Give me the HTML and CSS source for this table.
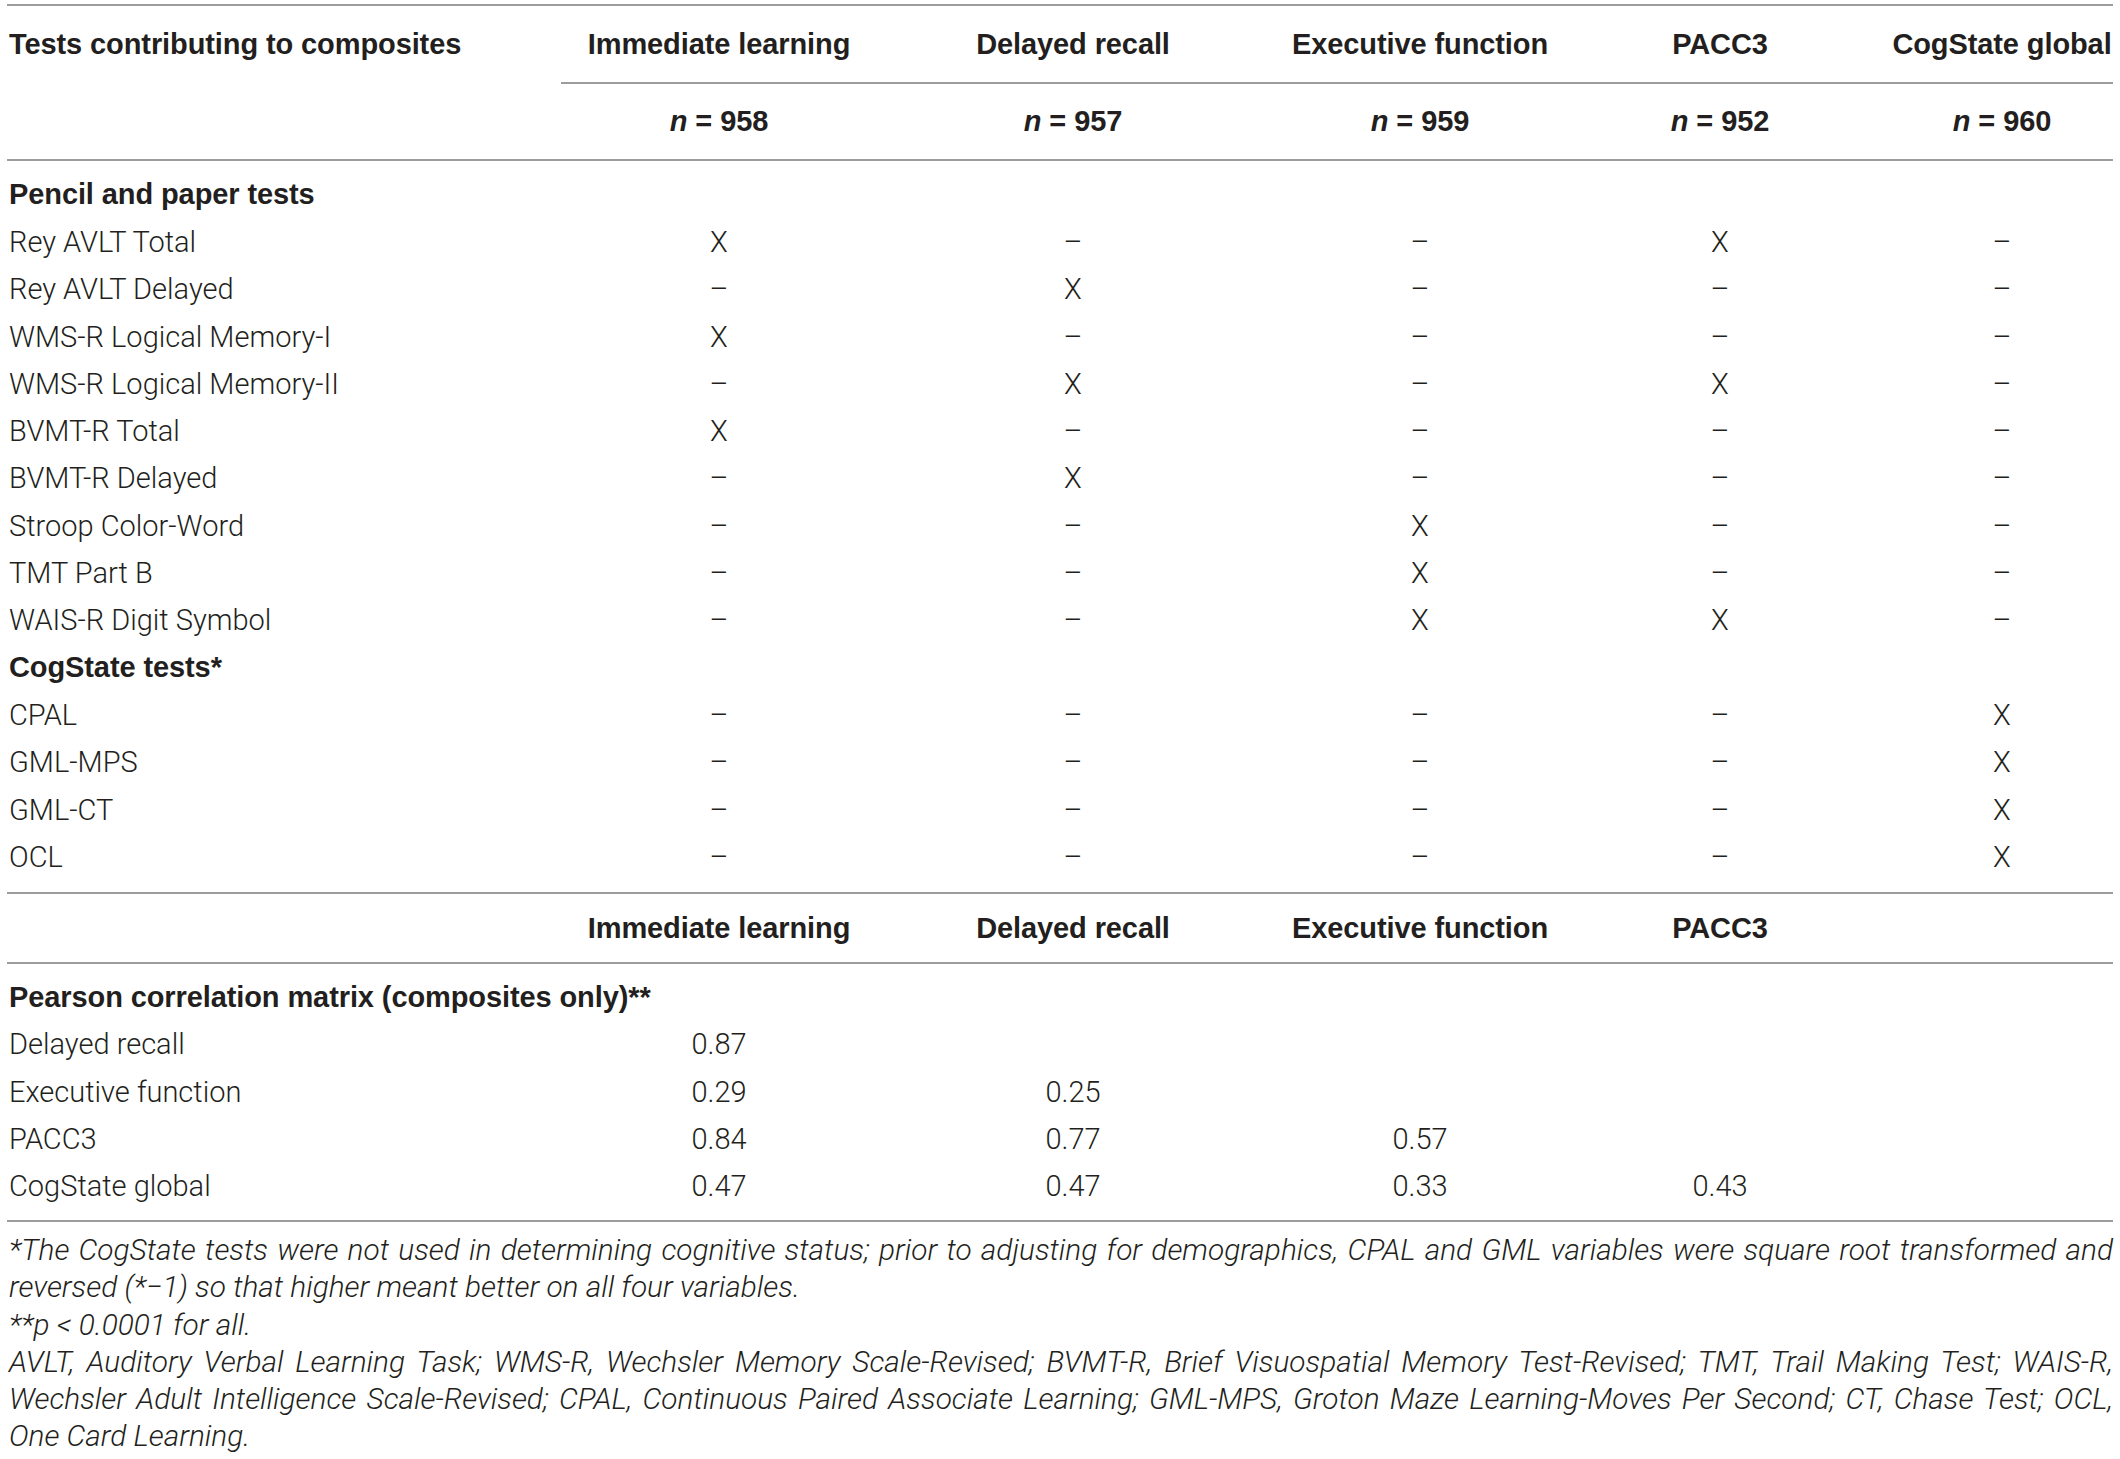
FILE: index.html
```html
<!DOCTYPE html>
<html lang="en">
<head>
    <meta charset="UTF-8">
    <title>Tests contributing to composites</title>
    <link rel="stylesheet" href="styles.css">
</head>
<body>
    <div class="table-wrap">
        <table class="comp-table">
            <colgroup>
                <col class="c-label">
                <col class="c-imm">
                <col class="c-del">
                <col class="c-exec">
                <col class="c-pacc">
                <col class="c-cog">
            </colgroup>
            <thead>
                <tr class="head-row top">
                    <th class="label">Tests contributing to composites</th>
                    <th>Immediate learning</th>
                    <th>Delayed recall</th>
                    <th>Executive function</th>
                    <th>PACC3</th>
                    <th class="last">CogState global</th>
                </tr>
                <tr class="head-row n-row">
                    <th class="label"></th>
                    <th><i>n</i> = 958</th>
                    <th><i>n</i> = 957</th>
                    <th><i>n</i> = 959</th>
                    <th><i>n</i> = 952</th>
                    <th class="last"><i>n</i> = 960</th>
                </tr>
            </thead>
            <tbody class="section tests">
                <tr class="spacer top"><td colspan="6"></td></tr>
                <tr class="group"><td class="label" colspan="6">Pencil and paper tests</td></tr>
                <tr><td class="label">Rey AVLT Total</td><td>X</td><td>–</td><td>–</td><td>X</td><td class="last">–</td></tr>
                <tr><td class="label">Rey AVLT Delayed</td><td>–</td><td>X</td><td>–</td><td>–</td><td class="last">–</td></tr>
                <tr><td class="label">WMS-R Logical Memory-I</td><td>X</td><td>–</td><td>–</td><td>–</td><td class="last">–</td></tr>
                <tr><td class="label">WMS-R Logical Memory-II</td><td>–</td><td>X</td><td>–</td><td>X</td><td class="last">–</td></tr>
                <tr><td class="label">BVMT-R Total</td><td>X</td><td>–</td><td>–</td><td>–</td><td class="last">–</td></tr>
                <tr><td class="label">BVMT-R Delayed</td><td>–</td><td>X</td><td>–</td><td>–</td><td class="last">–</td></tr>
                <tr><td class="label">Stroop Color-Word</td><td>–</td><td>–</td><td>X</td><td>–</td><td class="last">–</td></tr>
                <tr><td class="label">TMT Part B</td><td>–</td><td>–</td><td>X</td><td>–</td><td class="last">–</td></tr>
                <tr><td class="label">WAIS-R Digit Symbol</td><td>–</td><td>–</td><td>X</td><td>X</td><td class="last">–</td></tr>
                <tr class="group"><td class="label" colspan="6">CogState tests*</td></tr>
                <tr><td class="label">CPAL</td><td>–</td><td>–</td><td>–</td><td>–</td><td class="last">X</td></tr>
                <tr><td class="label">GML-MPS</td><td>–</td><td>–</td><td>–</td><td>–</td><td class="last">X</td></tr>
                <tr><td class="label">GML-CT</td><td>–</td><td>–</td><td>–</td><td>–</td><td class="last">X</td></tr>
                <tr><td class="label">OCL</td><td>–</td><td>–</td><td>–</td><td>–</td><td class="last">X</td></tr>
                <tr class="spacer bottom"><td colspan="6"></td></tr>
            </tbody>
            <tbody class="section">
                <tr class="head-row mid">
                    <th class="label"></th>
                    <th>Immediate learning</th>
                    <th>Delayed recall</th>
                    <th>Executive function</th>
                    <th>PACC3</th>
                    <th class="last"></th>
                </tr>
            </tbody>
            <tbody class="section matrix">
                <tr class="spacer top"><td colspan="6"></td></tr>
                <tr class="group"><td class="label" colspan="6">Pearson correlation matrix (composites only)**</td></tr>
                <tr><td class="label">Delayed recall</td><td>0.87</td><td></td><td></td><td></td><td class="last"></td></tr>
                <tr><td class="label">Executive function</td><td>0.29</td><td>0.25</td><td></td><td></td><td class="last"></td></tr>
                <tr><td class="label">PACC3</td><td>0.84</td><td>0.77</td><td>0.57</td><td></td><td class="last"></td></tr>
                <tr><td class="label">CogState global</td><td>0.47</td><td>0.47</td><td>0.33</td><td>0.43</td><td class="last"></td></tr>
                <tr class="spacer bottom"><td colspan="6"></td></tr>
            </tbody>
        </table>

        <div class="notes">
            <p>*The CogState tests were not used in determining cognitive status; prior to adjusting for demographics, CPAL and GML variables were square root transformed and reversed (*−1) so that higher meant better on all four variables.</p>
            <p>**p &lt; 0.0001 for all.</p>
            <p>AVLT, Auditory Verbal Learning Task; WMS-R, Wechsler Memory Scale-Revised; BVMT-R, Brief Visuospatial Memory Test-Revised; TMT, Trail Making Test; WAIS-R, Wechsler Adult Intelligence Scale-Revised; CPAL, Continuous Paired Associate Learning; GML-MPS, Groton Maze Learning-Moves Per Second; CT, Chase Test; OCL, One Card Learning.</p>
        </div>
    </div>
</body>
</html>
```

FILE: styles.css
```css
body {
    margin: 0;
    padding: 0;
    background: #ffffff;
    color: #231f20;
    font-family: Roboto, "Liberation Sans", sans-serif;
    font-weight: 300;
}
.table-wrap {
    width: 2106px;
    padding: 4px 0 0 7px;
}
.comp-table {
    width: 100%;
    border-collapse: collapse;
    table-layout: fixed;
    font-size: 29px;
}
.c-label { width: 554px; }
.c-imm { width: 316px; }
.c-del { width: 392px; }
.c-exec { width: 302px; }
.c-pacc { width: 298px; }
.c-cog { width: 244px; }

.comp-table td,
.comp-table th {
    padding: 0;
    text-align: center;
    white-space: nowrap;
}
.comp-table .label {
    text-align: left;
    padding-left: 2px;
}
.comp-table .last {
    padding-left: 22px;
}
.comp-table td {
    height: 47.3px;
}
.comp-table th,
.group td {
    font-family: "Liberation Sans", Arial, sans-serif;
    font-weight: 700;
    font-size: 29px;
    letter-spacing: -0.1px;
}
.head-row.top th {
    height: 76px;
    border-top: 2px solid #9c9c9c;
}
.head-row.top th:not(.label) {
    border-bottom: 2px solid #9c9c9c;
}
.head-row.n-row th {
    height: 75px;
    border-bottom: 2px solid #9c9c9c;
}
.head-row.mid th {
    height: 68px;
    border-top: 2px solid #9c9c9c;
    border-bottom: 2px solid #9c9c9c;
}
.tests .spacer.top td { height: 10px; }
.tests .spacer.bottom td { height: 12px; }
.matrix .spacer.top td { height: 9px; }
.matrix .spacer.bottom td {
    height: 10px;
    border-bottom: 2px solid #9c9c9c;
}

.notes {
    padding: 9px 0 0 2px;
    font-size: 29.8px;
    font-style: italic;
    line-height: 37.3px;
    text-align: justify;
}
.notes p {
    margin: 0;
}
```
